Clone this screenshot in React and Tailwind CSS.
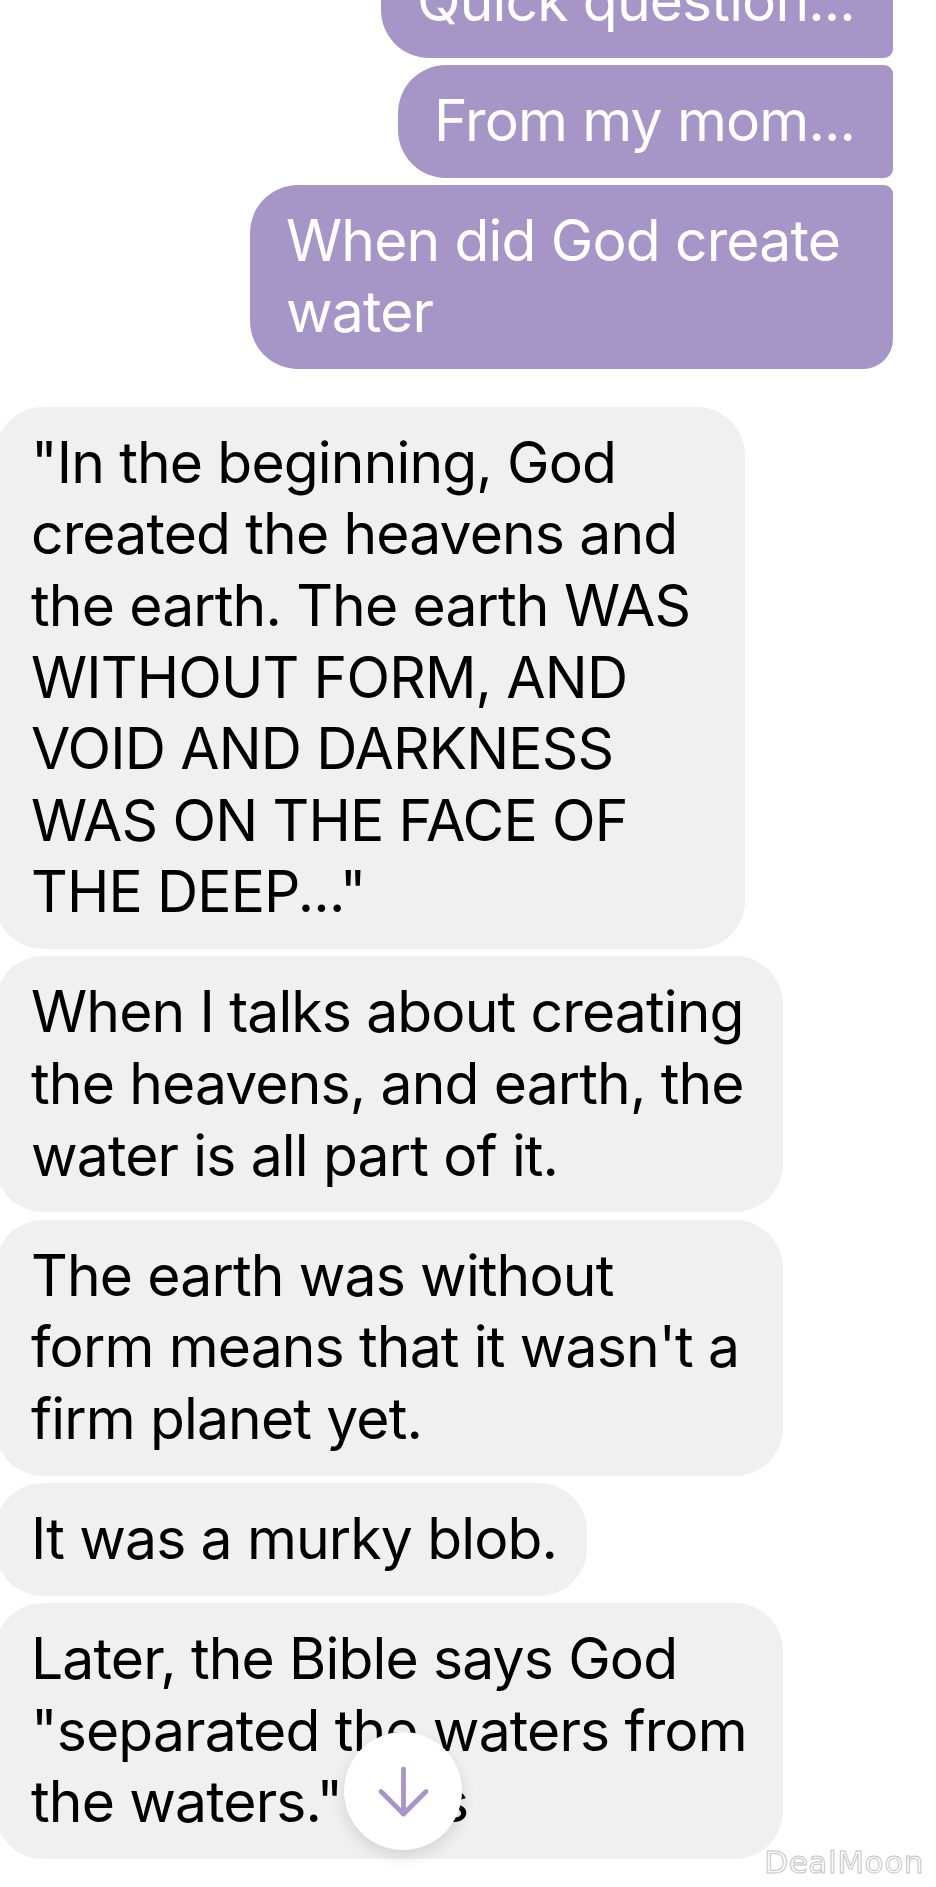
import { ArrowDown } from "lucide-react";

const sent = [
  { w: "w-[512px]", lines: ["Quick question..."] },
  { w: "w-[495px]", lines: ["From my mom..."] },
  { w: "w-[643px]", lines: ["When did God create", "water"], last: true },
];

const received = [
  {
    w: "w-[750px]",
    lines: [
      "\"In the beginning, God",
      "created the heavens and",
      "the earth. The earth WAS",
      "WITHOUT FORM, AND",
      "VOID AND DARKNESS",
      "WAS ON THE FACE OF",
      "THE DEEP...\"",
    ],
  },
  {
    w: "w-[788px]",
    lines: [
      "When I talks about creating",
      "the heavens, and earth, the",
      "water is all part of it.",
    ],
  },
  {
    w: "w-[788px]",
    lines: [
      "The earth was without",
      "form means that it wasn't a",
      "firm planet yet.",
    ],
  },
  { w: "w-[592px]", lines: ["It was a murky blob."] },
  {
    w: "w-[788px]",
    lines: [
      "Later, the Bible says God",
      "\"separated the waters from",
      "the waters.\" This",
    ],
  },
];

function Bubble({ lines, w, mine, last }) {
  const shape = mine
    ? last
      ? "rounded-l-[48px] rounded-tr-[9px] rounded-br-[30px] bg-[#a695c7] text-white"
      : "rounded-l-[48px] rounded-r-[9px] bg-[#a695c7] text-white"
    : "rounded-[48px] bg-[#f0f0f0] text-black";
  return (
    <div className={`${w} ${shape} pl-[36px] pr-[40px] pt-[20px] pb-[21px]`}>
      {lines.map((l, i) => (
        <div key={i} className="whitespace-nowrap">
          {l}
        </div>
      ))}
    </div>
  );
}

export default function App() {
  return (
    <div className="relative w-full h-[1887px] overflow-hidden bg-white font-['Inter','Liberation_Sans',sans-serif] text-[57px] leading-[71.6px] tracking-[-0.015em]">
      <div className="-mt-[54.6px] flex flex-col items-end gap-[7px] pr-[43px]">
        {sent.map((m, i) => (
          <Bubble key={i} {...m} mine />
        ))}
      </div>
      <div className="mt-[38px] -ml-[5px] flex flex-col items-start gap-[7.5px]">
        {received.map((m, i) => (
          <Bubble key={i} {...m} />
        ))}
      </div>

      {/* scroll to bottom */}
      <button className="absolute left-[344px] top-[1732px] w-[118px] h-[118px] rounded-full bg-white shadow-[0_6px_16px_rgba(0,0,0,0.12)] flex items-center justify-center">
        <ArrowDown size={77} strokeWidth={1.5} className="text-[#a695c7]" />
      </button>

      <div className="absolute right-[12px] bottom-[9px] text-[31px] leading-none tracking-[0.02em] text-white font-['DejaVu_Sans',sans-serif] [-webkit-text-stroke:1px_#c4c4c4]">
        DealMoon
      </div>
    </div>
  );
}
